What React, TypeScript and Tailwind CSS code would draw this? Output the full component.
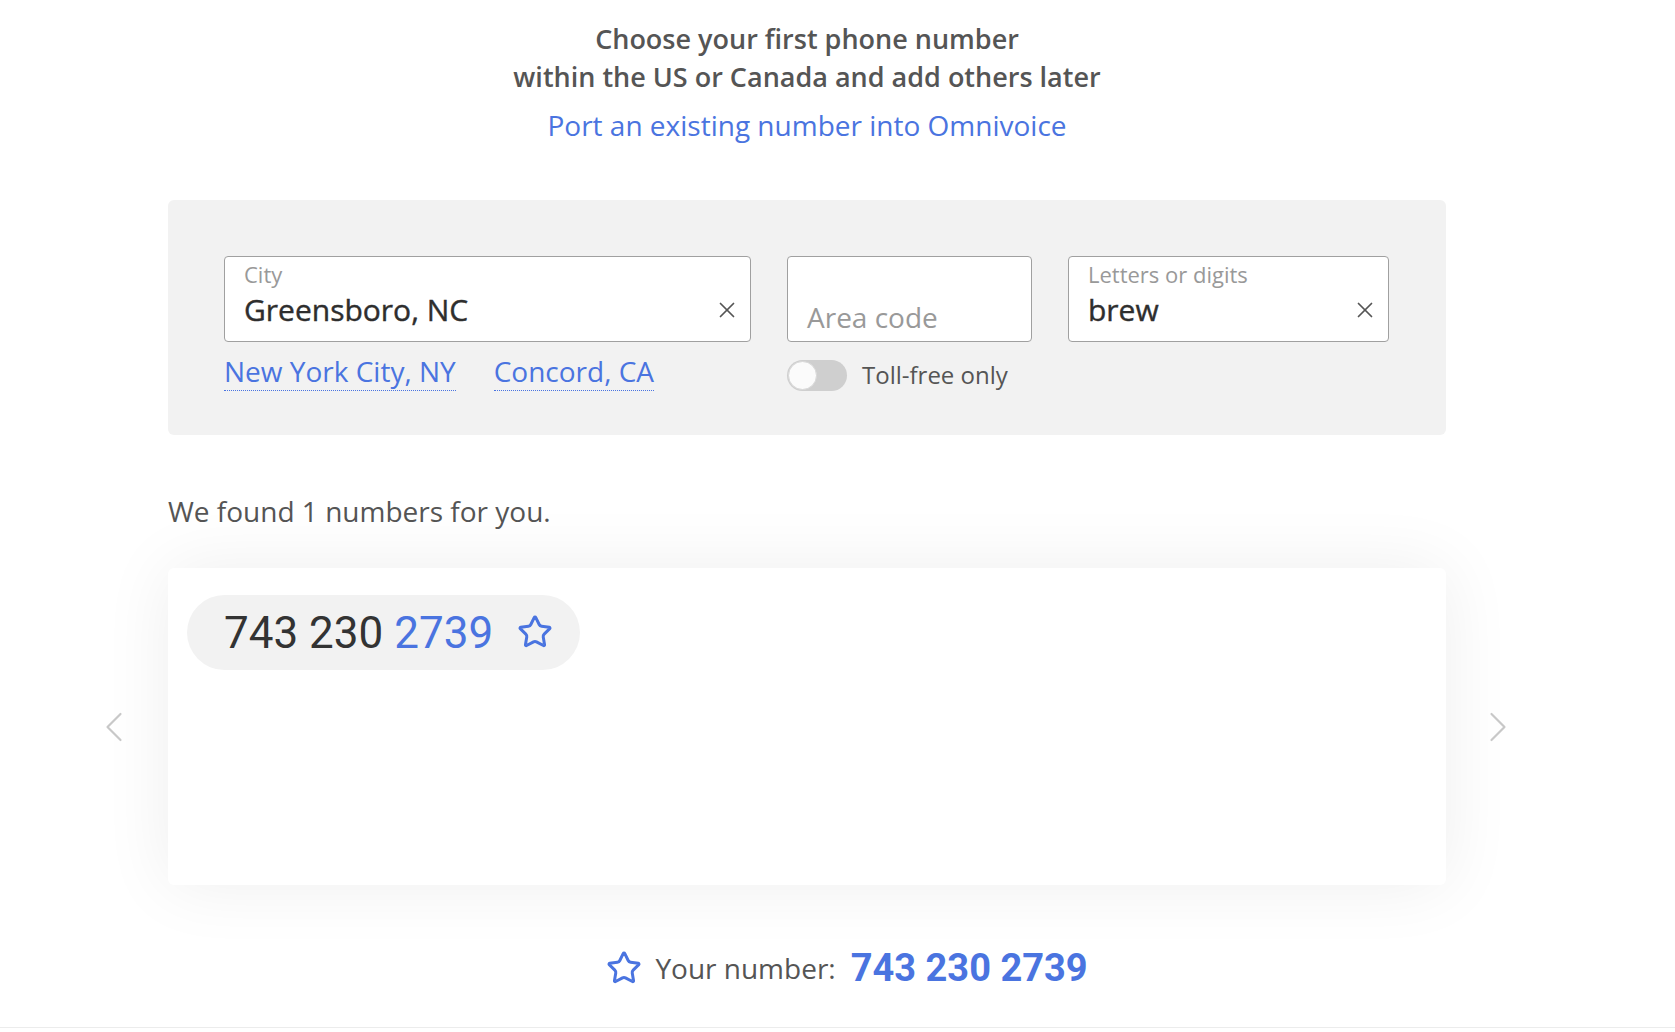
import { Star, X, ChevronLeft, ChevronRight } from "lucide-react";

const font = { fontFamily: '"Open Sans", "Noto Sans", sans-serif' };
const digits = { fontFamily: 'Roboto, "Open Sans", sans-serif' };

function ClearButton() {
  return (
    <button className="absolute right-[10px] top-[40px] text-[#555]">
      <X size={26} strokeWidth={1.6} />
    </button>
  );
}

function CityLink({ children }: { children: string }) {
  return (
    <a className="border-b border-dotted border-[#4a74e0] pb-[1px] text-[28px] leading-[35px] text-[#4a74e0]">
      {children}
    </a>
  );
}

export default function App() {
  return (
    <div className="h-[1028px] border-b border-[#ececec] bg-white" style={font}>
      <div className="w-[1614px] pt-[20px]">
        <div className="mx-auto flex w-[1278px] flex-col">
          {/* Heading */}
          <h1 className="text-center text-[27px] font-semibold leading-[38px] text-[#555]">
            Choose your first phone number
            <br />
            within the US or Canada and add others later
          </h1>
          <a className="mt-[9px] text-center text-[28px] leading-[40px] text-[#4a74e0]">
            Port an existing number into Omnivoice
          </a>

          {/* Filters */}
          <div className="mt-[55px] flex gap-[36px] rounded-[6px] bg-[#f2f2f2] px-[56px] pb-[44px] pt-[56px]">
            <div className="flex w-[527px] flex-col">
              <div className="relative flex h-[86px] flex-col rounded-[4px] border border-[#a0a0a0] bg-white px-[19px] pt-[4px]">
                <span className="text-[22px] leading-[26px] text-[#999]">City</span>
                <span
                  className="mt-[5px] text-[30px] leading-[36px] text-[#2e2e2e]"
                  style={{ WebkitTextStroke: "0.4px #2e2e2e" }}
                >
                  Greensboro, NC
                </span>
                <ClearButton />
              </div>
              <div className="mt-[12px] flex gap-[38px]">
                <CityLink>New York City, NY</CityLink>
                <CityLink>Concord, CA</CityLink>
              </div>
            </div>

            <div className="flex w-[245px] flex-col">
              <div className="flex h-[86px] items-end rounded-[4px] border border-[#a0a0a0] bg-white px-[19px] pb-[4px]">
                <span className="text-[28px] leading-[40px] text-[#999]">Area code</span>
              </div>
              <div className="mt-[17px] flex items-center gap-[15px]">
                <div className="flex h-[31px] w-[60px] items-center rounded-full bg-[#cfcfcf] px-[1px]">
                  <div className="h-[29px] w-[29px] rounded-full border border-[#d8d8d8] bg-[#fbfbfb]" />
                </div>
                <span className="text-[24px] leading-[32px] text-[#555]">Toll-free only</span>
              </div>
            </div>

            <div className="relative flex h-[86px] w-[321px] flex-col rounded-[4px] border border-[#a0a0a0] bg-white px-[19px] pt-[4px]">
              <span className="text-[22px] leading-[26px] text-[#999]">Letters or digits</span>
              <span
                className="mt-[5px] text-[30px] leading-[36px] text-[#2e2e2e]"
                style={{ WebkitTextStroke: "0.4px #2e2e2e" }}
              >
                brew
              </span>
              <ClearButton />
            </div>
          </div>

          <p className="mt-[58px] text-[28px] leading-[36px] text-[#555]">
            We found 1 numbers for you.
          </p>

          {/* Results carousel */}
          <div className="relative mt-[39px]">
            <button className="absolute left-[-80px] top-1/2 -translate-y-1/2 text-[#c8c8c8]">
              <ChevronLeft size={52} strokeWidth={1} />
            </button>
            <div className="h-[317px] rounded-[6px] bg-white px-[19px] pt-[27px] shadow-[0_0_70px_rgba(0,0,0,0.07)]">
              <div className="flex h-[75px] w-[393px] items-center rounded-full bg-[#f2f2f2] pl-[37px]">
                <span className="text-[44px] leading-none text-[#333]" style={digits}>
                  743 230 <span className="text-[#4a74e0]">2739</span>
                </span>
                <Star size={36} strokeWidth={2} className="ml-[24px] mt-[-2px] text-[#4a74e0]" />
              </div>
            </div>
            <button className="absolute right-[-78px] top-1/2 -translate-y-1/2 text-[#c8c8c8]">
              <ChevronRight size={52} strokeWidth={1} />
            </button>
          </div>

          {/* Selected */}
          <div className="mt-[63px] flex items-center justify-center gap-[13px] pl-[80px]">
            <Star size={36} strokeWidth={2} className="text-[#4a74e0]" />
            <span className="text-[28px] leading-[40px] text-[#555]">Your number:</span>
            <span className="ml-[2px] text-[38px] font-bold leading-[40px] text-[#4a74e0]" style={digits}>
              743 230 2739
            </span>
          </div>
        </div>
      </div>
    </div>
  );
}
